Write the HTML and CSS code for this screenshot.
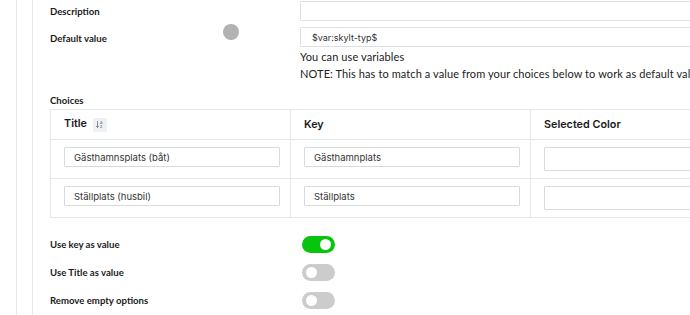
FILE: index.html
```html
<!DOCTYPE html>
<html lang="sv">
<head>
    <meta charset="UTF-8">
    <meta name="viewport" content="width=device-width, initial-scale=1.0">
    <title>Field settings</title>
    <link rel="stylesheet" href="styles.css">
</head>
<body>
    <div class="frame">
        <div class="panel">
            <!-- grundinställningar -->
            <div class="field">
                <label class="label">Description</label>
                <input class="text-input" type="text" value="">
            </div>
            <div class="field field-default">
                <label class="label label-default">Default value</label>
                <div>
                    <input class="text-input" type="text" value="$var:skylt-typ$">
                    <p class="help">You can use variables</p>
                    <p class="help">NOTE: This has to match a value from your choices below to work as default value</p>
                </div>
            </div>

            <!-- val -->
            <div class="label choices-label">Choices</div>
            <table class="choices">
                <thead>
                    <tr>
                        <th>Title <span class="sort-btn"><svg width="9" height="9" viewBox="0 0 9 9"><path d="M2.5 1v6.5M1 6l1.5 1.5L4 6" fill="none" stroke="#7a828c" stroke-width="0.9"/><text x="5" y="4" font-size="3.6" font-family="Inter, sans-serif" fill="#7a828c">A</text><text x="5" y="8.2" font-size="3.6" font-family="Inter, sans-serif" fill="#7a828c">Z</text></svg></span></th>
                        <th>Key</th>
                        <th>Selected Color</th>
                    </tr>
                </thead>
                <tbody>
                    <tr>
                        <td><input class="cell-input" type="text" value="Gästhamnsplats (båt)"></td>
                        <td><input class="cell-input" type="text" value="Gästhamnplats"></td>
                        <td><input class="color-input" type="text" value=""></td>
                    </tr>
                    <tr>
                        <td><input class="cell-input" type="text" value="Ställplats (husbil)"></td>
                        <td><input class="cell-input" type="text" value="Ställplats"></td>
                        <td><input class="color-input" type="text" value=""></td>
                    </tr>
                </tbody>
            </table>

            <!-- växlar -->
            <div class="toggles">
                <div class="toggle-row">
                    <span class="label">Use key as value</span>
                    <span class="switch on"></span>
                </div>
                <div class="toggle-row">
                    <span class="label">Use Title as value</span>
                    <span class="switch"></span>
                </div>
                <div class="toggle-row">
                    <span class="label">Remove empty options</span>
                    <span class="switch"></span>
                </div>
            </div>
        </div>
    </div>
    <div class="cursor-dot"></div>
</body>
</html>
```

FILE: styles.css
```css
html, body {
    margin: 0;
    height: 315px;
    overflow: hidden;
    background: #fff;
}
body {
    font-family: Lato, "Liberation Sans", sans-serif;
    color: #1d1d1f;
    position: relative;
}
.frame {
    margin-left: 16px;
    border-left: 1px solid #e8e8e8;
    height: 315px;
}
.panel {
    margin-left: 15px;
    border-left: 1px solid #e8e8e8;
    padding-left: 17px;
    height: 315px;
    width: 900px;
}
.label {
    font-size: 9.6px;
    font-weight: 700;
    color: #1b1b1b;
}
.field {
    display: grid;
    grid-template-columns: 250px 440px;
    align-items: start;
}
.field .label {
    padding-top: 6px;
}
.field-default {
    margin-top: 6px;
}
.field-default .label-default {
    padding-top: 6px;
}
.text-input {
    display: block;
    box-sizing: border-box;
    width: 440px;
    height: 20px;
    margin: 1px 0 0;
    padding: 0 11px;
    border: 1px solid #dcdfe3;
    border-radius: 1px;
    font-family: Inter, sans-serif;
    font-size: 9px;
    color: #333;
    outline: none;
}
.field-default .text-input {
    margin-top: 0;
}
.help {
    margin: 0;
    font-size: 11px;
    letter-spacing: 0.1px;
    line-height: 17px;
    white-space: nowrap;
    color: #222;
}
.help:first-of-type {
    margin-top: 1px;
}
.choices-label {
    margin-top: 13px;
    line-height: 12px;
}
.choices {
    margin-top: 2px;
    border-collapse: collapse;
    font-family: Inter, sans-serif;
}
.choices th,
.choices td {
    border: 1px solid #e3e6ea;
    width: 216px;
    padding: 0 10px 0 13px;
    text-align: left;
}
.choices th {
    height: 29px;
    font-size: 10.8px;
    font-weight: 600;
    color: #1a1a1a;
}
.choices td {
    height: 39px;
    vertical-align: top;
    padding-top: 7px;
    box-sizing: border-box;
}
.sort-btn {
    display: inline-flex;
    align-items: center;
    justify-content: center;
    width: 14px;
    height: 14px;
    margin-left: 3px;
    vertical-align: middle;
    background: #eef1f4;
    border-radius: 2px;
}
.cell-input,
.color-input {
    box-sizing: border-box;
    width: 216px;
    height: 20px;
    padding: 0 9px;
    border: 1px solid #d7dade;
    border-radius: 1px;
    font-family: Inter, sans-serif;
    font-size: 9.5px;
    color: #333;
    outline: none;
    display: block;
}
.color-input {
    width: 216px;
    height: 24px;
}
.toggles {
    margin-top: 18px;
    display: flex;
    flex-direction: column;
    gap: 11px;
}
.toggle-row {
    display: grid;
    grid-template-columns: 252px 40px;
    align-items: center;
    height: 17px;
}
.switch {
    position: relative;
    display: block;
    width: 33px;
    height: 17px;
    border-radius: 9px;
    background: #cccccc;
}
.switch::after {
    content: "";
    position: absolute;
    top: 3px;
    left: 4px;
    width: 11px;
    height: 11px;
    border-radius: 50%;
    background: #fff;
}
.switch.on {
    background: #08c40c;
}
.switch.on::after {
    left: 18px;
}
.cursor-dot {
    position: absolute;
    left: 223px;
    top: 24px;
    width: 16px;
    height: 16px;
    border-radius: 50%;
    background: #b2b2b2;
}
```
